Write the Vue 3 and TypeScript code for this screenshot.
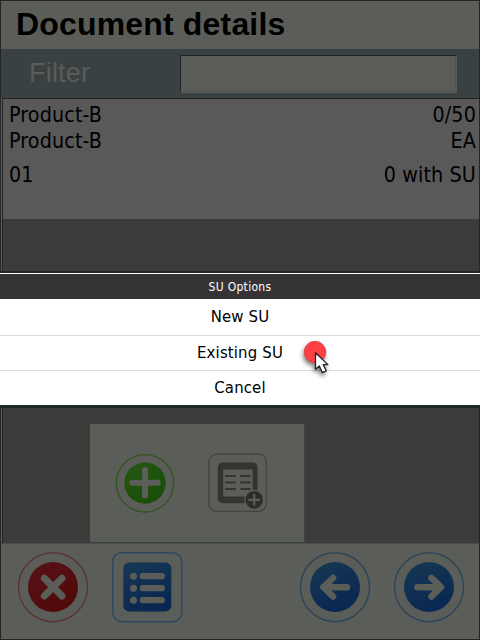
<script setup lang="ts">
interface ItemRow {
  left: string
  right: string
}

const rows: ItemRow[] = [
  { left: 'Product-B', right: '0/50' },
  { left: 'Product-B', right: 'EA' },
  { left: '01', right: '0 with SU' },
]

const options: string[] = ['New SU', 'Existing SU', 'Cancel']
</script>

<template>
  <div class="screen">
    <div class="frame">
      <header class="title">Document details</header>
      <div class="filter">
        <label class="filter-label" for="filter">Filter</label>
        <input id="filter" class="filter-input" type="text" />
      </div>
      <main class="body">
        <div class="item">
          <div v-for="(row, i) in rows" :key="i" class="row">
            <span>{{ row.left }}</span>
            <span>{{ row.right }}</span>
          </div>
        </div>
        <div class="panel">
          <svg class="icon" width="60" height="60" viewBox="0 0 60 60">
            <defs>
              <linearGradient id="green" x1="0" y1="0" x2="0.7" y2="1">
                <stop offset="0" stop-color="#265812" />
                <stop offset="1" stop-color="#184e08" />
              </linearGradient>
            </defs>
            <circle cx="30" cy="30.3" r="28.7" fill="none" stroke="#30541f" stroke-width="1.3" />
            <circle cx="30" cy="30" r="20.7" fill="url(#green)" />
            <path d="M30 17V42.5M17.2 29.8H42.8" stroke="#5b5d59" stroke-width="6" stroke-linecap="round" />
          </svg>
          <svg class="icon" width="60" height="60" viewBox="0 0 60 60">
            <rect x="1" y="1" width="57.4" height="57.4" rx="8" fill="none" stroke="#434441" stroke-width="1.3" />
            <rect x="9.8" y="9.4" width="39.8" height="40.8" rx="5" fill="#333432" />
            <rect x="15.2" y="16.5" width="29.5" height="27" fill="#5b5d59" />
            <path d="M17.1 23H27.6M32.3 23H42.6M17.1 29.5H27.6M32.3 29.5H42.6M17.1 36H27.6M32.3 36H42.6" stroke="#333432" stroke-width="2" />
            <circle cx="46.2" cy="46.8" r="10" fill="#5b5d59" />
            <circle cx="46.2" cy="46.8" r="8.8" fill="#2c2d2b" />
            <path d="M46.2 41.8V51.8M41.2 46.8H51.2" stroke="#5b5d59" stroke-width="2.2" stroke-linecap="round" />
          </svg>
        </div>
      </main>
      <footer class="footer">
        <svg class="icon" width="72" height="72" viewBox="0 0 72 72">
          <defs>
            <linearGradient id="red" x1="0" y1="0" x2="0.7" y2="1">
              <stop offset="0" stop-color="#58131b" />
              <stop offset="1" stop-color="#500906" />
            </linearGradient>
            <linearGradient id="blue" x1="0.2" y1="0" x2="0.6" y2="1">
              <stop offset="0" stop-color="#163753" />
              <stop offset="1" stop-color="#082752" />
            </linearGradient>
          </defs>
          <circle cx="36" cy="36.2" r="34.5" fill="none" stroke="#583534" stroke-width="1.4" />
          <circle cx="36" cy="36" r="25" fill="url(#red)" />
          <path d="M27.3 27.3L45 45M45 27.3L27.3 45" stroke="#5b5d59" stroke-width="7" stroke-linecap="round" />
        </svg>
        <svg class="icon" width="72" height="72" viewBox="0 0 72 72">
          <rect x="1.8" y="1.7" width="69" height="69" rx="9" fill="none" stroke="#2f4860" stroke-width="1.5" />
          <rect x="12.3" y="11.5" width="48" height="49" rx="6" fill="url(#blue)" />
          <g fill="#5b5d59">
            <circle cx="22.5" cy="25.3" r="3.5" />
            <circle cx="22.5" cy="37.2" r="3.5" />
            <circle cx="22.5" cy="49.2" r="3.5" />
          </g>
          <path d="M31.8 25.2H50.8M31.8 37.2H50.8M31.8 49.2H50.8" stroke="#5b5d59" stroke-width="6.2" stroke-linecap="round" />
        </svg>
        <span class="spacer"></span>
        <svg class="icon" width="72" height="72" viewBox="0 0 72 72">
          <circle cx="36" cy="36.2" r="34.5" fill="none" stroke="#2d4558" stroke-width="1.4" />
          <circle cx="36" cy="36" r="25" fill="url(#blue)" />
          <path d="M48 36.2H25M34 27L24.5 36.2L34 45.5" fill="none" stroke="#5b5d59" stroke-width="6.6" stroke-linecap="round" stroke-linejoin="round" />
        </svg>
        <svg class="icon" width="72" height="72" viewBox="0 0 72 72">
          <circle cx="36" cy="36.2" r="34.5" fill="none" stroke="#2d4558" stroke-width="1.4" />
          <circle cx="36" cy="36" r="25" fill="url(#blue)" />
          <path d="M24.5 36.2H47M38.5 27L48 36.2L38.5 45.5" fill="none" stroke="#5b5d59" stroke-width="6.6" stroke-linecap="round" stroke-linejoin="round" />
        </svg>
      </footer>
    </div>

    <div class="dialog">
      <div class="dialog-title">SU Options</div>
      <div v-for="option in options" :key="option" class="option">{{ option }}</div>
    </div>

    <svg class="pointer" width="40" height="44" viewBox="0 0 40 44">
      <circle cx="15" cy="14" r="10.7" fill="#fc4044" stroke="#dc3539" stroke-width="0.8" />
      <path d="M15.5 14.8V31.2L19.3 28L22.3 34.6L26.2 32.8L23.2 26.6H27.9Z" fill="#fff" stroke="#222" stroke-width="1.3" stroke-linejoin="round" />
    </svg>
  </div>
</template>

<style>
body {
  margin: 0;
}
</style>

<style scoped>
.screen {
  position: relative;
  width: 480px;
  height: 640px;
  overflow: hidden;
  color: #000;
  font-family: 'DejaVu Sans Condensed', 'DejaVu Sans', sans-serif;
  font-stretch: condensed;
}
.frame {
  box-sizing: border-box;
  height: 640px;
  border: 1px solid #252624;
  display: flex;
  flex-direction: column;
  background: #5b5d59;
}
.title {
  height: 48px;
  padding-left: 15px;
  font: bold 32px/46px 'Liberation Sans', sans-serif;
  letter-spacing: 0.17px;
}
.filter {
  height: 49px;
  display: flex;
  align-items: center;
  background: #394143;
}
.filter-label {
  width: 151px;
  padding-left: 28px;
  font: 27px/46px 'Liberation Sans', sans-serif;
  letter-spacing: 0.2px;
  margin-bottom: 2px;
  color: #5b5d59;
}
.filter-input {
  box-sizing: border-box;
  width: 277px;
  height: 38px;
  margin: 1px 0 0;
  padding: 0 4px;
  border: 1px solid;
  border-color: #1f2321 #5b5d59 #5b5d59 #1f2321;
  outline: none;
  border-radius: 0;
  background: #5b5d59;
  box-shadow: inset -1px -1px #51534f;
}
.body {
  box-sizing: border-box;
  height: 445px;
  margin-left: 1px;
  border: solid #222321;
  border-width: 1px 0 0 1px;
  display: flex;
  flex-direction: column;
  justify-content: space-between;
  background: #3b3c39;
}
.item {
  box-sizing: border-box;
  height: 120px;
  padding: 3px 3px 0 6px;
  background: #595959;
}
.row {
  display: flex;
  justify-content: space-between;
  font-size: 21.3px;
  letter-spacing: 0.13px;
  line-height: 26px;
}
.row:last-child {
  margin-top: 8px;
}
.panel {
  box-sizing: border-box;
  width: 215px;
  height: 119px;
  margin-left: 87px;
  padding: 29px 0 0 25px;
  border: solid #394347;
  border-width: 0 1px 1px 0;
  display: flex;
  gap: 33px;
  background: #5b5d59;
}
.icon {
  flex: none;
}
.footer {
  box-sizing: border-box;
  flex: 1;
  border-top: 1px solid #4b4d4a;
  padding: 7px 14px 0 16px;
  display: flex;
  gap: 22px;
}
.spacer {
  flex: 1;
}
.dialog {
  position: absolute;
  left: 0;
  top: 273px;
  width: 480px;
  box-sizing: border-box;
  border-top: 1px solid #fff;
  box-shadow: 0 -2px #242723, 0 3px #222823;
  background: #fff;
  text-align: center;
}
.dialog-title {
  height: 25px;
  background: #353336;
  color: #fff;
  font-size: 12px;
  letter-spacing: 0.3px;
  line-height: 26px;
}
.option {
  box-sizing: border-box;
  height: 35px;
  font-size: 16.6px;
  letter-spacing: 0.15px;
  line-height: 33px;
}
.option:nth-child(2) {
  height: 37px;
  line-height: 36px;
}
.option:last-child {
  height: 34px;
}
.option:not(:last-child) {
  border-bottom: 1px solid #dcdcdc;
}
.pointer {
  position: absolute;
  left: 300px;
  top: 338px;
  filter: drop-shadow(-1px 3px 2px rgba(0, 0, 0, 0.5));
}
</style>
